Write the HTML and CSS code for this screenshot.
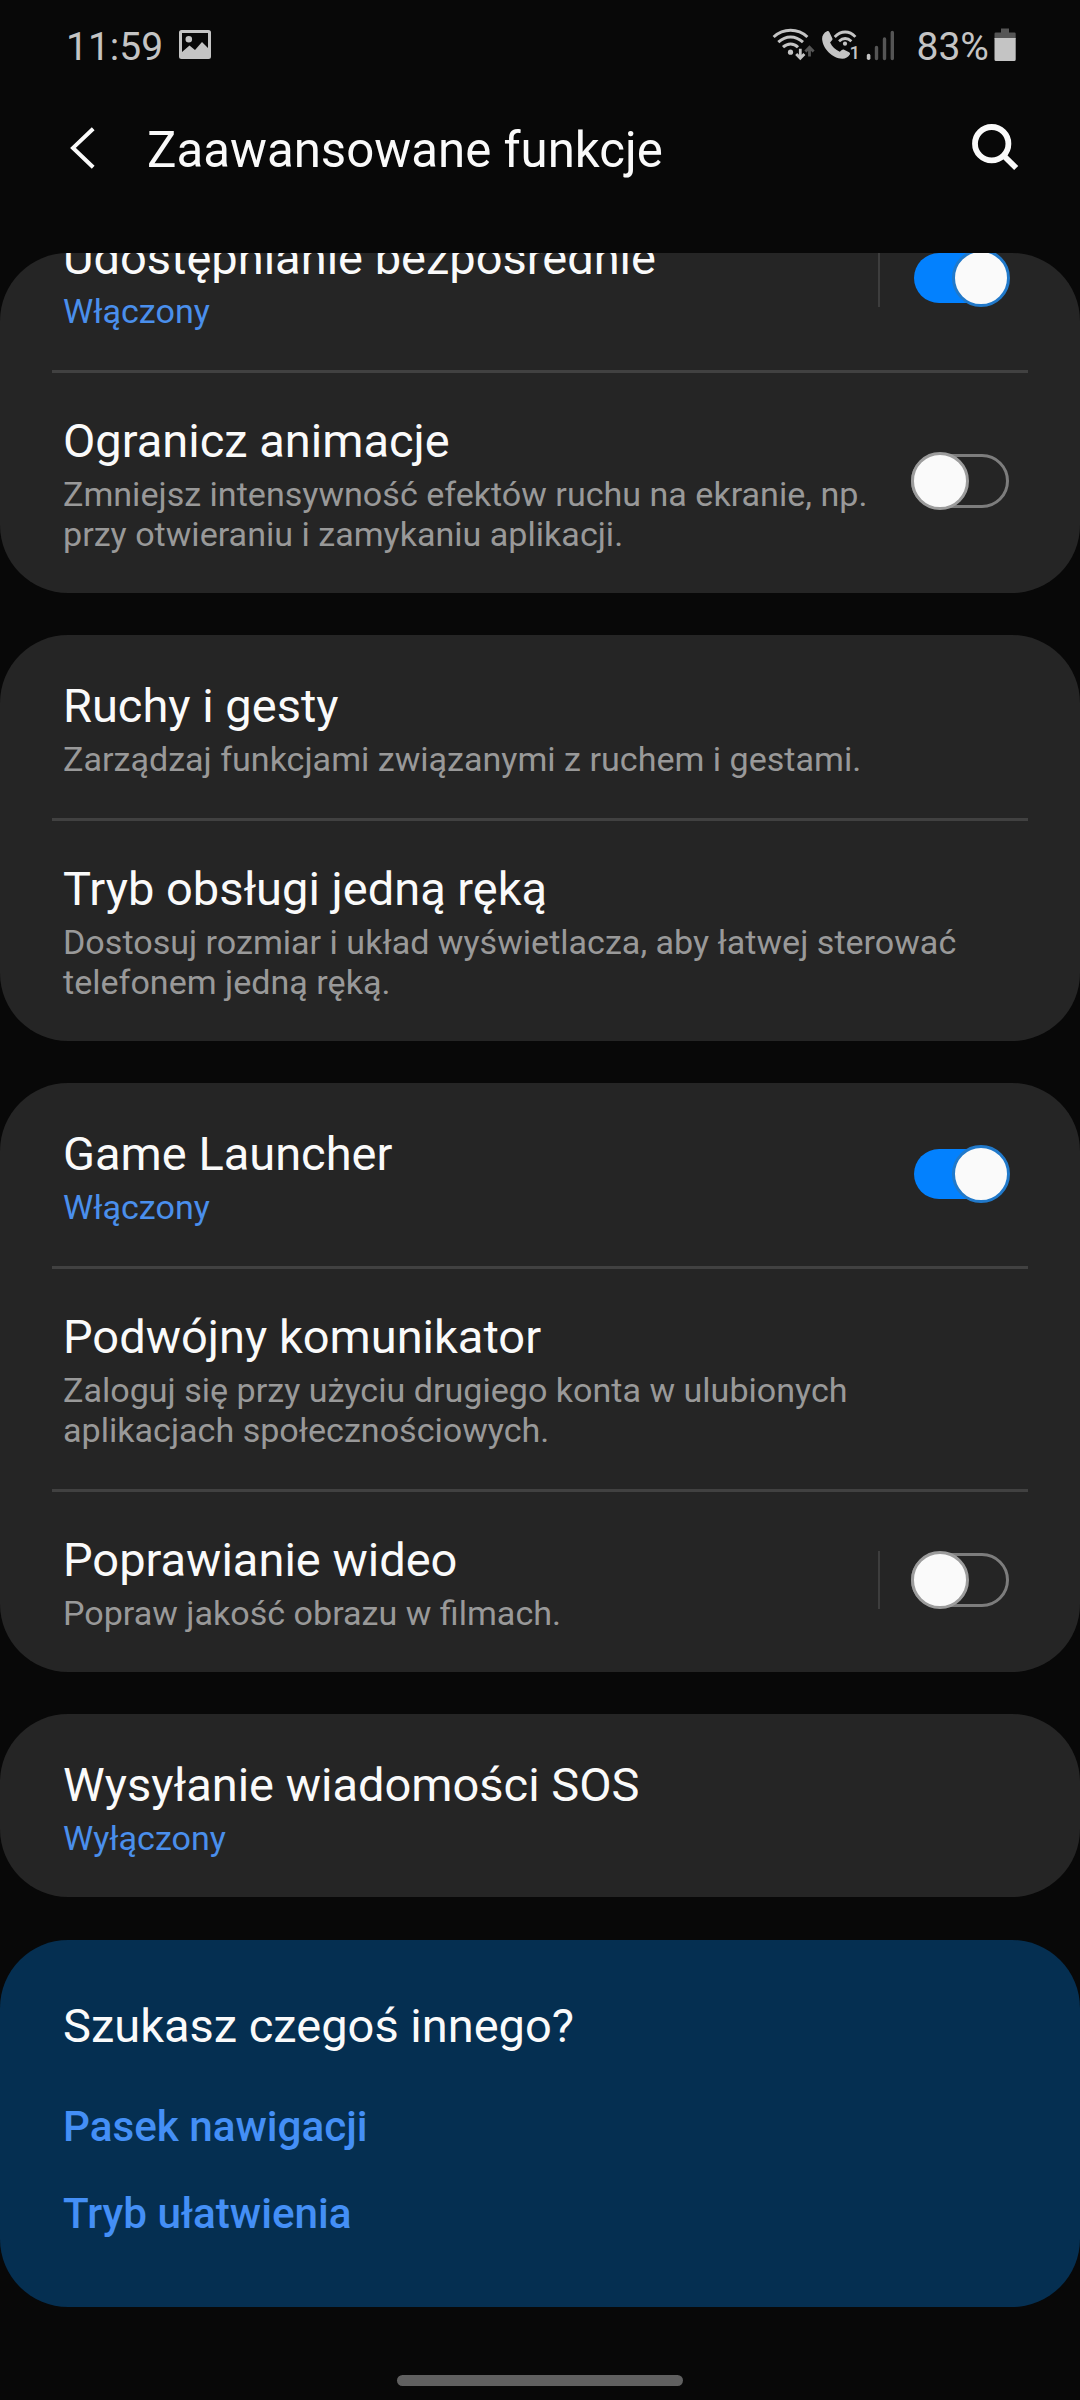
FILE: index.html
```html
<!DOCTYPE html>
<html lang="pl">
<head>
<meta charset="utf-8">
<title>Zaawansowane funkcje</title>
<link rel="stylesheet" href="styles.css">
</head>
<body>
<div class="screen">
  <div class="status">
    <span class="clock">11:59</span>
    <svg class="status-picture" width="34" height="32" viewBox="178 29 34 32">
      <path fill="#c4c4c4" fill-rule="evenodd" d="M181.500 30h27a2.500 2.500 0 0 1 2.500 2.500v24a2.500 2.500 0 0 1-2.500 2.500h-27a2.500 2.500 0 0 1-2.500-2.500v-24a2.500 2.500 0 0 1 2.500-2.500zM182 33v19l7.500-6.500 5.500 4.500 7-8 6 6V33zM188.800 36a3.300 3.300 0 1 1 0 6.600a3.300 3.300 0 0 1 0-6.600z"/>
    </svg>
    <svg class="status-signal" width="126" height="36" viewBox="772 27 126 36" fill="none" stroke="#c4c4c4">
      <path stroke-width="3" d="M773.600 37Q781 30.300 790.600 30.300T807.400 37"/>
      <path stroke-width="3" d="M778.300 42.200Q784 37 790.600 37T803 42.200"/>
      <path stroke-width="3" d="M783 47.200Q786.500 43.900 790.600 43.900T798 47.200"/>
      <circle cx="790.500" cy="52.200" r="2.600" fill="#c4c4c4" stroke="none"/>
      <path stroke-width="2.800" d="M800.300 48.800v9M796.200 54l4.100 4.300l4.100-4.300"/>
      <path stroke="#555" stroke-width="2.800" d="M809.500 56.500v-9M805.400 51.500l4.100-4.300l4.100 4.300"/>
      <path fill="#c4c4c4" stroke="none" d="M827 31.200c1-.5 1.900-.2 2.300.8l3 6.300c.4.900.2 1.700-.5 2.300l-1.700 1.900c2 4.200 5.300 7.300 9.700 9.300l2-1.800c.7-.6 1.500-.7 2.300-.3l5 2.500c.9.500 1.200 1.400.7 2.300-1.500 2.700-4.200 4.200-7.500 4.200-9.700-.3-19.500-9.700-20.200-19.700-.1-3.500 1.700-6.300 4.900-7.800z"/>
      <path stroke-width="2.800" d="M834.700 36.900Q839.500 32 845.200 32T855.400 36.900M839 41.200Q842 38.500 845.200 38.500T851.400 41.200"/>
      <circle cx="845" cy="43.700" r="2.100" fill="#c4c4c4" stroke="none"/>
      <text x="849.500" y="59" class="sim">1</text>
      <path stroke-width="3.600" stroke-linecap="round" d="M868.600 55.500v2.800"/>
      <path stroke="#555" stroke-width="3.400" stroke-linecap="round" d="M876.500 47.500v11M884.500 39v19.500M892.300 32.500v26"/>
    </svg>
    <span class="percent">83%</span>
    <svg class="status-battery" width="22" height="34" viewBox="993.500 28 22 34">
      <path fill="#555" d="M1000.500 28.500h8v4h5.500a1.200 1.200 0 0 1 1.200 1.200V39h-21.200v-5.300a1.200 1.200 0 0 1 1.200-1.200h5.300z"/>
      <path fill="#c4c4c4" d="M994 38h21.200v21.500a1.500 1.500 0 0 1-1.500 1.500h-18.200a1.500 1.500 0 0 1-1.500-1.500z"/>
    </svg>
  </div>

  <header class="appbar">
    <svg class="back" width="28" height="44" viewBox="69 125.500 28 44"><path fill="none" stroke="#fafafa" stroke-width="4" d="M93.200 128.200L73 147.400L93.200 166.800"/></svg>
    <h1 class="heading">Zaawansowane funkcje</h1>
    <svg class="search" width="48" height="48" viewBox="971 123 48 48" fill="none" stroke="#fafafa" stroke-width="5.800"><circle cx="991.700" cy="143.700" r="16.700"/><path d="M1004 156l12.200 12"/></svg>
  </header>

  <main class="list">
    <section class="card scrolled">
      <div class="item">
        <div class="label"><div class="title">Udostępnianie bezpośrednie</div><div class="sub accent">Włączony</div></div>
        <div class="control split"><span class="switch on"></span></div>
      </div>
      <div class="item">
        <div class="label"><div class="title">Ogranicz animacje</div><div class="sub">Zmniejsz intensywność efektów ruchu na ekranie, np.<br>przy otwieraniu i zamykaniu aplikacji.</div></div>
        <div class="control"><span class="switch"></span></div>
      </div>
    </section>

    <section class="card">
      <div class="item">
        <div class="label"><div class="title">Ruchy i gesty</div><div class="sub">Zarządzaj funkcjami związanymi z ruchem i gestami.</div></div>
      </div>
      <div class="item">
        <div class="label"><div class="title">Tryb obsługi jedną ręką</div><div class="sub">Dostosuj rozmiar i układ wyświetlacza, aby łatwej sterować<br>telefonem jedną ręką.</div></div>
      </div>
    </section>

    <section class="card">
      <div class="item">
        <div class="label"><div class="title">Game Launcher</div><div class="sub accent">Włączony</div></div>
        <div class="control"><span class="switch on"></span></div>
      </div>
      <div class="item">
        <div class="label"><div class="title">Podwójny komunikator</div><div class="sub">Zaloguj się przy użyciu drugiego konta w ulubionych<br>aplikacjach społecznościowych.</div></div>
      </div>
      <div class="item">
        <div class="label"><div class="title">Poprawianie wideo</div><div class="sub">Popraw jakość obrazu w filmach.</div></div>
        <div class="control split"><span class="switch"></span></div>
      </div>
    </section>

    <section class="card">
      <div class="item">
        <div class="label"><div class="title">Wysyłanie wiadomości SOS</div><div class="sub accent">Wyłączony</div></div>
      </div>
    </section>

    <section class="card related">
      <h2 class="title">Szukasz czegoś innego?</h2>
      <a class="link">Pasek nawigacji</a>
      <a class="link">Tryb ułatwienia</a>
    </section>
  </main>

  <div class="home"></div>
</div>
</body>
</html>
```
FILE: styles.css
```css
*, *::before { box-sizing: border-box; }

body {
  margin: 0;
  background: #080808;
  color: #fafafa;
  font-family: Roboto, "Noto Sans", sans-serif;
}

.screen {
  width: 1080px;
  height: 2400px;
  display: flex;
  flex-direction: column;
  overflow: hidden;
}

svg { display: block; flex: none; }

.status {
  height: 93px;
  padding-left: 66px;
  padding-right: 64px;
  display: flex;
  align-items: flex-start;
  color: #c4c4c4;
  font-size: 39px;
  line-height: 48px;
}

.clock, .percent { padding-top: 23px; white-space: nowrap; }
.clock { width: 112px; }
.status-picture { margin-top: 29px; }
.status-signal { margin: 27px 19px 0 auto; }
.percent { width: 77.500px; }
.status-battery { margin-top: 28px; }
.sim { font-size: 18.500px; font-weight: 500; fill: #c4c4c4; stroke: none; }

.appbar {
  height: 160px;
  padding: 0 61px 0 69px;
  display: flex;
  align-items: flex-start;
}

.back { margin-top: 32.500px; }

.heading {
  flex: 1;
  margin: 27px 0 0 50px;
  font-size: 49.200px;
  font-weight: 400;
  line-height: 60px;
}

.search { margin-top: 30px; }

.list {
  display: flex;
  flex-direction: column;
  gap: 42px;
}

.card {
  border-radius: 68px;
  background: #252525;
  overflow: hidden;
}

.scrolled {
  height: 340px;
  display: flex;
  flex-direction: column;
  justify-content: flex-end;
}

.item {
  flex: none;
  display: flex;
  justify-content: space-between;
  padding: 43px 71px 39px 63px;
}

.item + .item {
  background: linear-gradient(#414141, #414141) 52px 0 / 976px 3px no-repeat;
}

.label { flex: none; }

.title {
  margin: 0;
  font-size: 47px;
  font-weight: 400;
  line-height: 56px;
  white-space: nowrap;
}

.sub {
  margin-top: 5px;
  color: #999;
  font-size: 34.100px;
  line-height: 40px;
  white-space: nowrap;
}

.accent { color: #4a8fec; }

.control {
  display: flex;
  align-items: center;
  height: 58px;
  align-self: center;
  margin-top: -5px;
}

.split {
  border-left: 2px solid #3d3d3d;
  padding-left: 29px;
}

.switch {
  position: relative;
  width: 98px;
  height: 54px;
  margin-left: 2px;
  border: 3px solid #7d7d7d;
  border-radius: 27px;
}

.switch::before {
  content: "";
  position: absolute;
  left: -3px;
  top: -5px;
  width: 58px;
  height: 58px;
  border: 3px solid #9c9c9c;
  border-radius: 50%;
  background: #fafafa;
}

.switch.on {
  width: 95px;
  height: 50px;
  margin-left: 5px;
  border: 0;
  background: #0381fe;
}

.switch.on::before {
  left: 38px;
  top: -4px;
  border-color: #2179ca;
}

.related {
  height: 367px;
  margin-top: 1px;
  padding: 58px 63px 0;
  background: #052f51;
  display: flex;
  flex-direction: column;
}

.link {
  margin-top: 37px;
  color: #448ff6;
  font-size: 42.200px;
  font-weight: 500;
  line-height: 50px;
}

.link:first-of-type { margin-top: 48px; }

.home {
  width: 286px;
  height: 11px;
  margin: 68px auto 0;
  border-radius: 6px;
  background: #606060;
}
```
